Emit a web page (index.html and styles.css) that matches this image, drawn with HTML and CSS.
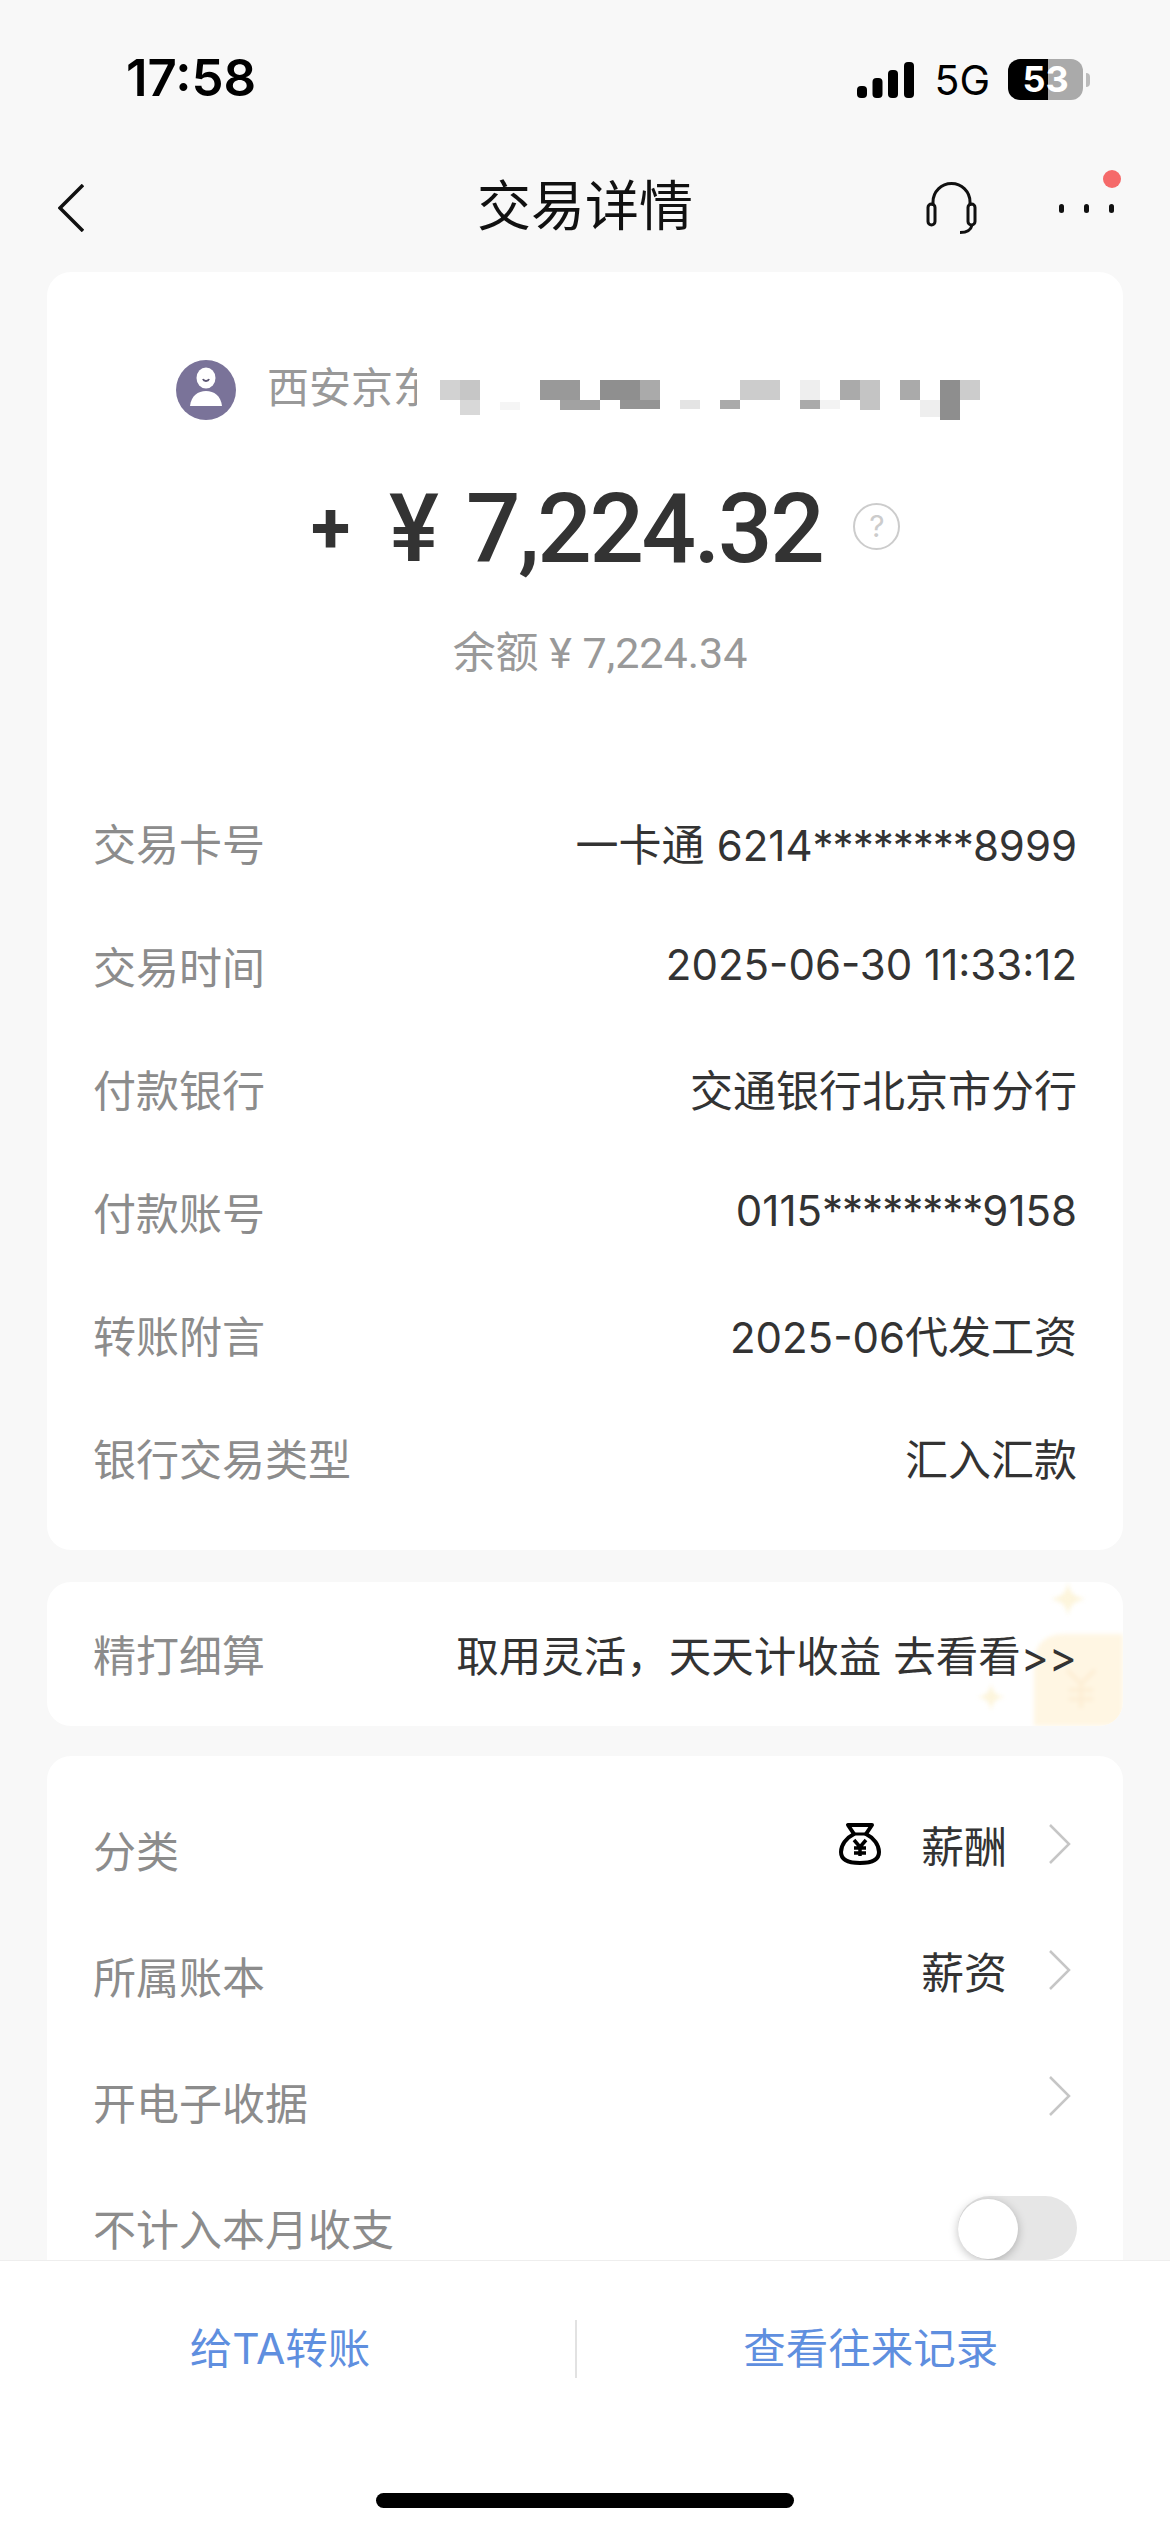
FILE: index.html
```html
<!DOCTYPE html>
<html lang="zh-CN">
  <head>
    <meta charset="UTF-8" />
    <meta name="viewport" content="width=device-width, initial-scale=1.0" />
    <title>交易详情</title>
    <link rel="stylesheet" href="styles.css">
  </head>
  <body>
    <div class="screen">
      <!-- Status bar -->
      <div class="status-bar">
        <span class="clock">17:58</span>
        <div class="status-right">
          <svg class="signal" viewBox="0 0 57 36">
            <rect x="0" y="24" width="10" height="12" rx="4" />
            <rect x="15.5" y="16" width="10" height="20" rx="4" />
            <rect x="31" y="8" width="10" height="28" rx="4" />
            <rect x="47" y="0" width="10" height="36" rx="4" />
          </svg>
          <span class="network">5G</span>
          <div class="battery">
            <span class="battery-text">53</span>
          </div>
          <span class="battery-nub"></span>
        </div>
      </div>

      <!-- Nav bar -->
      <div class="nav-bar">
        <svg class="back-icon" viewBox="0 0 26 48">
          <path d="M25 1 2 24l23 23" />
        </svg>
        <span class="nav-title">交易详情</span>
        <svg class="headset-icon" viewBox="0 0 53 52">
          <path d="M8 24v-4a18.500 18.500 0 0 1 37 0v4" />
          <rect x="3" y="22" width="7" height="21" rx="3.500" />
          <rect x="43" y="22" width="7" height="21" rx="3.500" />
          <path d="M47 43c-1 5-6 7.500-12 7.500" />
        </svg>
        <div class="more-btn">
          <span class="dot"></span>
          <span class="dot"></span>
          <span class="dot"></span>
          <span class="red-dot"></span>
        </div>
      </div>

      <!-- Main card -->
      <div class="card card-main">
        <div class="merchant">
          <svg class="avatar" viewBox="0 0 60 60">
            <circle cx="30" cy="30" r="30" fill="#7a7399" />
            <ellipse cx="30" cy="18" rx="9.500" ry="10.500" fill="#fff" />
            <path d="M27 19c1 2.500 5 2.500 6 0" fill="none" stroke="#5b5572" stroke-width="2" />
            <path d="M14 46c1-10 8-15 16-15s15 5 16 15z" fill="#fff" />
          </svg>
          <span class="merchant-name">西安京东</span>
          <svg class="mosaic" viewBox="0 0 540 50">
            <rect x="0" y="0" width="20" height="20" fill="#d2d2d2" />
            <rect x="20" y="0" width="20" height="20" fill="#c6c6c6" />
            <rect x="20" y="20" width="20" height="15" fill="#d8d8d8" />
            <rect x="60" y="22" width="20" height="8" fill="#f5f5f5" />
            <rect x="100" y="0" width="40" height="20" fill="#999" />
            <rect x="120" y="20" width="40" height="10" fill="#a2a2a2" />
            <rect x="160" y="0" width="40" height="20" fill="#8f8f8f" />
            <rect x="200" y="0" width="20" height="20" fill="#aaa" />
            <rect x="180" y="20" width="40" height="9" fill="#949494" />
            <rect x="240" y="20" width="20" height="9" fill="#e4e4e4" />
            <rect x="280" y="20" width="20" height="9" fill="#aaa" />
            <rect x="300" y="0" width="40" height="20" fill="#ccc" />
            <rect x="360" y="0" width="20" height="20" fill="#eee" />
            <rect x="360" y="20" width="20" height="9" fill="#aaa" />
            <rect x="380" y="20" width="20" height="9" fill="#f3f3f3" />
            <rect x="400" y="0" width="20" height="20" fill="#aaa" />
            <rect x="420" y="0" width="20" height="30" fill="#c4c4c4" />
            <rect x="460" y="0" width="20" height="20" fill="#aaa" />
            <rect x="480" y="20" width="20" height="17" fill="#eee" />
            <rect x="500" y="0" width="20" height="40" fill="#8e8e8e" />
            <rect x="520" y="0" width="20" height="20" fill="#ccc" />
          </svg>
        </div>

        <div class="amount-row">
          <span class="amount-sign">+</span>
          <span class="amount-yen">¥</span>
          <span class="amount-num">7,224.32</span>
          <span class="help-icon">?</span>
        </div>
        <div class="balance">余额 ¥ 7,224.34</div>

        <div class="detail-list">
          <div class="row">
            <span class="label">交易卡号</span>
            <span class="value">一卡通 <span class="value-digits">6214<span class="mask">********</span>8999</span></span>
          </div>
          <div class="row">
            <span class="label">交易时间</span>
            <span class="value value-digits">2025-06-30 11:33:12</span>
          </div>
          <div class="row">
            <span class="label">付款银行</span>
            <span class="value">交通银行北京市分行</span>
          </div>
          <div class="row">
            <span class="label">付款账号</span>
            <span class="value value-digits">0115<span class="mask">********</span>9158</span>
          </div>
          <div class="row">
            <span class="label">转账附言</span>
            <span class="value"><span class="value-digits">2025-06</span>代发工资</span>
          </div>
          <div class="row">
            <span class="label">银行交易类型</span>
            <span class="value">汇入汇款</span>
          </div>
        </div>
      </div>

      <!-- Promo card -->
      <div class="card card-promo">
        <svg class="promo-art" viewBox="0 0 160 144">
          <path d="M105 0c2 11 5 14 17 17-12 3-15 6-17 17-2-11-5-14-17-17 12-3 15-6 17-17z" fill="#fdf5dc" />
          <path d="M28 101c2 10 4 12 14 14-10 2-12 4-14 14-2-10-4-12-14-14 10-2 12-4 14-14z" fill="#fdf5dc" />
          <path d="M71 144V82c0-18 10-30 30-30h59v92z" fill="#fff6e3" />
          <path d="M104 88l14 14 14-14M118 102v24M106 108h24M106 117h24" fill="none" stroke="#fdeed5" stroke-width="4" />
        </svg>
        <span class="label">精打细算</span>
        <span class="promo-text">取用灵活，天天计收益 去看看&gt;&gt;</span>
      </div>

      <!-- Settings card -->
      <div class="card card-settings">
        <div class="row row-tall">
          <span class="label">分类</span>
          <div class="row-right">
            <svg class="bag-icon" viewBox="0 0 42 42">
              <path d="M9 2h24l-6 9c8 4 13 11 13 18 0 8-7 11-19 11S2 37 2 29c0-7 5-14 13-18z" fill="none" stroke="#000" stroke-width="4" stroke-linejoin="round" />
              <path d="M14 11h14" stroke="#000" stroke-width="3" />
              <path d="M15 17l6 7 6-7M21 24v9M15 25h12M15 30h12" fill="none" stroke="#000" stroke-width="3.500" />
            </svg>
            <span class="value">薪酬</span>
            <svg class="chevron" viewBox="0 0 22 40"><path d="M1 1l19 19L1 39" /></svg>
          </div>
        </div>
        <div class="row row-tall">
          <span class="label">所属账本</span>
          <div class="row-right">
            <span class="value">薪资</span>
            <svg class="chevron" viewBox="0 0 22 40"><path d="M1 1l19 19L1 39" /></svg>
          </div>
        </div>
        <div class="row row-tall">
          <span class="label">开电子收据</span>
          <div class="row-right">
            <svg class="chevron" viewBox="0 0 22 40"><path d="M1 1l19 19L1 39" /></svg>
          </div>
        </div>
        <div class="row row-tall">
          <span class="label">不计入本月收支</span>
          <div class="toggle"><span class="toggle-knob"></span></div>
        </div>
      </div>

      <!-- Bottom bar, sits over the list -->
      <div class="bottom-bar">
        <div class="actions">
          <span class="action action-left">给TA转账</span>
          <span class="action-divider"></span>
          <span class="action action-right">查看往来记录</span>
        </div>
        <div class="home-indicator"></div>
      </div>
    </div>
  </body>
</html>
```

FILE: styles.css
```css
* {
  margin: 0;
  padding: 0;
  box-sizing: border-box;
}

body {
  font-family: "Inter", "Noto Sans CJK SC", sans-serif;
  background: #f8f8f8;
}

.screen {
  position: relative;
  width: 1170px;
  height: 2532px;
  overflow: hidden;
  background: #f8f8f8;
}

/* Status bar */
.status-bar {
  height: 154px;
  padding: 52px 80px 0 126px;
  display: flex;
  justify-content: space-between;
  align-items: flex-start;
}

.clock {
  font-family: "Inter", sans-serif;
  font-size: 51px;
  line-height: 52px;
  font-weight: 600;
  color: #000;
}

.status-right {
  display: flex;
  align-items: center;
  height: 52px;
  padding-top: 3px;
}

.signal {
  width: 57px;
  height: 36px;
  fill: #000;
}

.network {
  font-family: "Inter", sans-serif;
  font-size: 41px;
  font-weight: 400;
  line-height: 40px;
  color: #000;
  margin-left: 20px;
}

.battery {
  width: 75px;
  height: 41px;
  margin-left: 18px;
  border-radius: 12px;
  background: linear-gradient(90deg, #000 0, #000 53%, #aaa 53%, #aaa 100%);
  display: flex;
  justify-content: center;
  align-items: center;
}

.battery-text {
  font-family: "Inter", sans-serif;
  font-size: 36px;
  font-weight: 700;
  line-height: 41px;
  color: #fff;
}

.battery-nub {
  width: 4px;
  height: 14px;
  margin-left: 3px;
  border-radius: 0 4px 4px 0;
  background: #bbb;
}

/* Nav bar */
.nav-bar {
  position: relative;
  height: 118px;
  display: flex;
  align-items: center;
  padding: 0 58px 10px;
}

.back-icon {
  width: 26px;
  height: 48px;
  fill: none;
  stroke: #111;
  stroke-width: 3.5;
}

.nav-title {
  position: absolute;
  left: 0;
  right: 0;
  top: 0;
  height: 106px;
  line-height: 106px;
  text-align: center;
  font-size: 54px;
  color: #111;
}

.headset-icon {
  width: 53px;
  height: 52px;
  margin-left: auto;
  margin-right: 81px;
  fill: none;
  stroke: #111;
  stroke-width: 3;
}

.more-btn {
  position: relative;
  display: flex;
  gap: 20px;
  margin-right: -2px;
}

.dot {
  width: 5px;
  height: 9px;
  border-radius: 3px;
  background: #111;
}

.red-dot {
  position: absolute;
  right: -7px;
  top: -34px;
  width: 18px;
  height: 18px;
  border-radius: 50%;
  background: #f56a6a;
}

/* Cards */
.card {
  margin: 0 47px;
  background: #fff;
  border-radius: 24px;
}

.card-main {
  padding: 88px 46px 32px;
}

.merchant {
  display: flex;
  align-items: flex-start;
  height: 60px;
  padding-left: 83px;
}

.avatar {
  width: 60px;
  height: 60px;
  flex: none;
}

.merchant-name {
  width: 150px;
  margin-left: 31px;
  overflow: hidden;
  white-space: nowrap;
  font-size: 42px;
  line-height: 56px;
  color: #999;
}

.mosaic {
  width: 540px;
  height: 50px;
  margin-left: 23px;
  margin-top: 20px;
  flex: none;
}

.amount-row {
  display: flex;
  align-items: center;
  height: 96px;
  margin-top: 61px;
  padding-left: 218px;
  color: #333;
}

.amount-sign {
  font-family: "Roboto", sans-serif;
  font-size: 72px;
  font-weight: 700;
  line-height: 96px;
  width: 78px;
}

.amount-yen {
  font-family: "Roboto", sans-serif;
  font-size: 94px;
  font-weight: 500;
  line-height: 96px;
  width: 77px;
}

.amount-num {
  font-family: "Roboto", sans-serif;
  font-size: 96px;
  font-weight: 500;
  line-height: 96px;
  letter-spacing: -2.4px;
}

.help-icon {
  width: 47px;
  height: 47px;
  margin-left: 31px;
  margin-top: -6px;
  border: 2.5px solid #ccc;
  border-radius: 50%;
  font-size: 30px;
  line-height: 42px;
  text-align: center;
  color: #ccc;
}

.balance {
  margin-top: 48px;
  padding-left: 30px;
  height: 56px;
  line-height: 56px;
  text-align: center;
  font-family: "Roboto", "Noto Sans CJK SC", sans-serif;
  font-size: 43px;
  color: #999;
}

.detail-list {
  margin-top: 99px;
}

.row {
  display: flex;
  justify-content: space-between;
  align-items: center;
  height: 123px;
}

.label {
  font-size: 43px;
  color: #8c8c8c;
}

.value {
  font-size: 43px;
  color: #333;
}

.value-digits {
  font-size: 42px;
}

.mask {
  letter-spacing: -1px;
}

/* Promo card */
.card-promo {
  position: relative;
  overflow: hidden;
  height: 144px;
  margin-top: 32px;
  padding: 0 46px 2px;
  display: flex;
  justify-content: space-between;
  align-items: center;
}

.promo-art {
  position: absolute;
  right: 0;
  top: 0;
  width: 160px;
  height: 144px;
  filter: blur(2px);
}

.promo-text {
  position: relative;
  font-size: 42.5px;
  color: #333;
}

/* Settings card */
.card-settings {
  height: 700px;
  margin-top: 30px;
  padding: 30px 46px 0;
}

.row-tall {
  height: 126px;
}

.row-right {
  display: flex;
  align-items: center;
  padding-bottom: 10px;
}

.bag-icon {
  width: 42px;
  height: 42px;
  margin-right: 40px;
}

.chevron {
  width: 22px;
  height: 40px;
  margin-left: 42px;
  margin-right: 6px;
  fill: none;
  stroke: #c6c6c6;
  stroke-width: 2.5;
}

.toggle {
  position: relative;
  width: 119px;
  height: 64px;
  margin-top: 2px;
  border-radius: 32px;
  background: #e6e6e6;
}

.toggle-knob {
  position: absolute;
  left: 0;
  top: 3px;
  width: 60px;
  height: 60px;
  border-radius: 50%;
  background: #fff;
  box-shadow: 0 2px 10px rgba(0, 0, 0, 0.25);
}

/* Bottom bar */
.bottom-bar {
  position: absolute;
  left: 0;
  right: 0;
  bottom: 0;
  height: 272px;
  background: #fff;
  border-top: 1.5px solid #eeeeee;
}

.actions {
  display: flex;
  align-items: center;
  height: 58px;
  margin-top: 59px;
}

.action {
  flex: 1;
  text-align: center;
  font-size: 42.5px;
  margin-top: -8px;
  color: #5f8fdf;
}

.action-left {
  flex: none;
  width: 560px;
  margin-right: 15px;
}

.action-right {
  padding-right: 5px;
}

.action-divider {
  width: 1.5px;
  height: 58px;
  background: #e2e2e2;
}

.home-indicator {
  width: 418px;
  height: 15px;
  margin: 115px auto 0;
  border-radius: 8px;
  background: #000;
}
```
